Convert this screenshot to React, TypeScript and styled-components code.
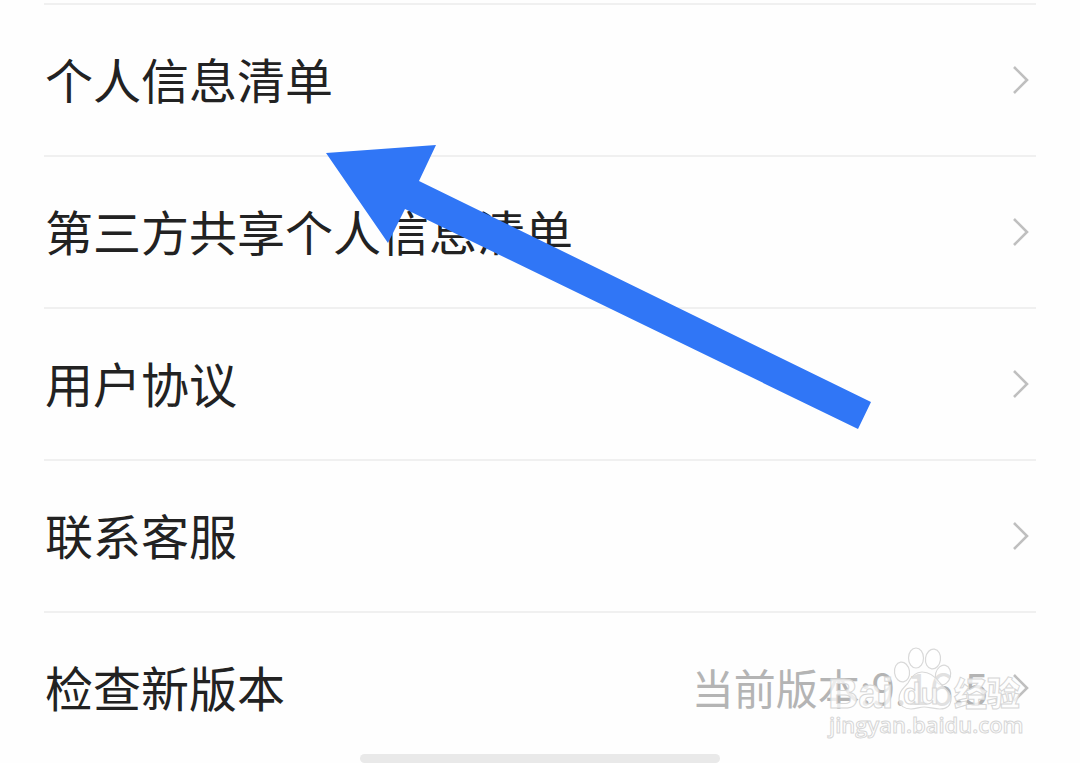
import React from "react";
import styled, { createGlobalStyle } from "styled-components";

const GlobalStyle = createGlobalStyle`
  * { box-sizing: border-box; }
  body {
    margin: 0;
    background: #fefefe;
    color: #222;
    font-family: "Noto Sans CJK SC", "Noto Sans", sans-serif;
    overflow-x: hidden;
  }
`;

const Page = styled.main`
  position: relative;
  padding: 3px 44px 0;
`;

const List = styled.ul`
  list-style: none;
  margin: 0;
  padding: 0;
`;

const Item = styled.li<{ $last?: boolean }>`
  position: relative;
  height: ${(p) => (p.$last ? 143 : 152)}px;
  border-top: 2px solid #f0f0f0;
`;

const RowLink = styled.a`
  display: flex;
  align-items: center;
  height: 150px;
  padding: 0 6px 0 1px;
  color: inherit;
  text-decoration: none;
`;

const Label = styled.span`
  flex: 1;
  padding-bottom: 4px;
  font-size: 48px;
  line-height: 72px;
  white-space: nowrap;
`;

const Value = styled.span`
  margin-right: 24px;
  padding-bottom: 2px;
  font-size: 42px;
  line-height: 64px;
  color: #b4b4b4;
  white-space: nowrap;
`;

const ChevronIcon = styled.svg`
  flex: none;
  display: block;
  width: 18px;
  height: 32px;
`;

const Arrow = styled.svg`
  position: absolute;
  left: 320px;
  top: 140px;
  width: 560px;
  height: 300px;
  pointer-events: none;
`;

const WatermarkArt = styled.svg`
  position: absolute;
  right: 0;
  top: 26px;
  width: 216px;
  height: 104px;
  pointer-events: none;

  text {
    fill: rgba(255, 255, 255, 0.75);
    stroke: #d6d6d6;
    stroke-width: 1px;
  }
`;

const HomeBar = styled.div`
  width: 360px;
  height: 9px;
  margin: 0 auto;
  border-radius: 5px;
  background: #e9e9e9;
`;

const Chevron = () => (
  <ChevronIcon viewBox="0 0 18 32" aria-hidden="true">
    <path d="M2 3 L15 16 L2 29" fill="none" stroke="#bfbfbf" strokeWidth="2.6" />
  </ChevronIcon>
);

const Watermark = () => (
  <WatermarkArt viewBox="0 0 216 104" aria-label="Baidu 经验">
    <text x="8" y="69" fontFamily="Liberation Sans, sans-serif" fontWeight="700" fontSize="42">Bai</text>
    <g fill="#fff" fillOpacity="0.6" stroke="#d9d9d9" strokeWidth="1.2">
      <ellipse cx="82" cy="33" rx="7.5" ry="10" transform="rotate(-8 82 33)" />
      <ellipse cx="96" cy="19" rx="7.5" ry="10" />
      <ellipse cx="113" cy="20" rx="7.5" ry="10" transform="rotate(8 113 20)" />
      <ellipse cx="123" cy="36" rx="7.5" ry="10" transform="rotate(14 123 36)" />
      <path d="M102 33 C95 33 91 38 88 44 C84 49 79 52 79 60 C79 67 85 70 91 70 C97 70 99 68 104 68 C109 68 114 70 120 70 C127 70 131 66 131 60 C131 53 125 50 120 44 C115 37 110 33 102 33Z" />
    </g>
    <text x="83" y="65" fontFamily="Liberation Sans, sans-serif" fontWeight="700" fontSize="29">du</text>
    <text x="134" y="67" fontFamily="Noto Sans CJK SC, sans-serif" fontWeight="900" fontSize="33">经验</text>
    <text x="9" y="94" fontFamily="Open Sans, sans-serif" fontWeight="600" fontSize="22">jingyan.baidu.com</text>
  </WatermarkArt>
);

const rows: { label: string; value?: string }[] = [
  { label: "个人信息清单" },
  { label: "第三方共享个人信息清单" },
  { label: "用户协议" },
  { label: "联系客服" },
  { label: "检查新版本", value: "当前版本:9.16.5" },
];

export default function App() {
  return (
    <>
      <GlobalStyle />
      <Page>
        <List>
          {rows.map((row) => (
            <Item key={row.label} $last={!!row.value}>
              <RowLink href="#">
                <Label>{row.label}</Label>
                {row.value && <Value>{row.value}</Value>}
                <Chevron />
              </RowLink>
              {row.value && <Watermark />}
            </Item>
          ))}
        </List>
        <HomeBar />
        <Arrow viewBox="0 0 560 300" aria-hidden="true">
          <path d="M6 13 L116 5 L99 41 L551 262 L538 289 L85 69 L68 103Z" fill="#3076f6" />
        </Arrow>
      </Page>
    </>
  );
}
